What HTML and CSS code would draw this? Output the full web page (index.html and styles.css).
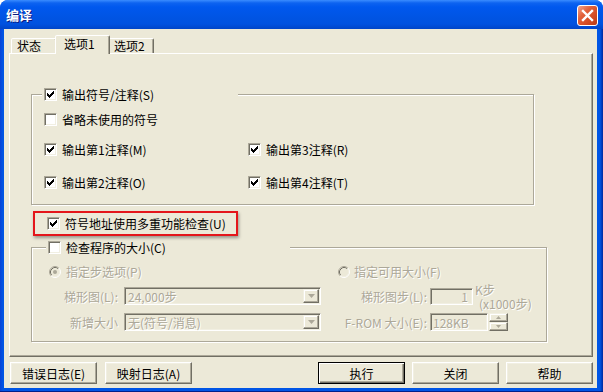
FILE: index.html
```html
<!DOCTYPE html>
<html>
<head>
<meta charset="utf-8">
<title>编译</title>
<link rel="stylesheet" href="styles.css">
</head>
<body>
<div class="window">
  <div class="titlebar">
    <span class="title">编译</span>
    <span class="close">
      <svg width="19" height="19" viewBox="0 0 19 19"><path d="M5 5 L14 14 M14 5 L5 14" stroke="#fff" stroke-width="2.4" stroke-linecap="square"/></svg>
    </span>
  </div>
  <div class="frame">
    <div class="client">
      <div class="tabs">
        <div class="tab t1">状态</div>
        <div class="tab sel">选项1</div>
        <div class="tab t3">选项2</div>
      </div>
      <div class="panel">
        <div class="group g1">
          <div class="legend l1">
            <span class="cb"><svg width="7" height="7" viewBox="0 0 7 7"><path d="M6 0h1v1h-1z M5 1h2v1h-2z M0 2h1v1h-1z M4 2h3v1h-3z M0 3h2v1h-2z M3 3h3v1h-3z M0 4h5v1h-5z M1 5h3v1h-3z M2 6h1v1h-1z" fill="#000"/></svg></span>
            <span>输出符号/注释(S)</span>
          </div>
          <div class="row r2"><span class="cb"></span><span>省略未使用的符号</span></div>
          <div class="grid2 r3">
            <div class="row"><span class="cb"><svg width="7" height="7" viewBox="0 0 7 7"><path d="M6 0h1v1h-1z M5 1h2v1h-2z M0 2h1v1h-1z M4 2h3v1h-3z M0 3h2v1h-2z M3 3h3v1h-3z M0 4h5v1h-5z M1 5h3v1h-3z M2 6h1v1h-1z" fill="#000"/></svg></span><span>输出第1注释(M)</span></div>
            <div class="row"><span class="cb"><svg width="7" height="7" viewBox="0 0 7 7"><path d="M6 0h1v1h-1z M5 1h2v1h-2z M0 2h1v1h-1z M4 2h3v1h-3z M0 3h2v1h-2z M3 3h3v1h-3z M0 4h5v1h-5z M1 5h3v1h-3z M2 6h1v1h-1z" fill="#000"/></svg></span><span>输出第3注释(R)</span></div>
          </div>
          <div class="grid2 r4">
            <div class="row"><span class="cb"><svg width="7" height="7" viewBox="0 0 7 7"><path d="M6 0h1v1h-1z M5 1h2v1h-2z M0 2h1v1h-1z M4 2h3v1h-3z M0 3h2v1h-2z M3 3h3v1h-3z M0 4h5v1h-5z M1 5h3v1h-3z M2 6h1v1h-1z" fill="#000"/></svg></span><span>输出第2注释(O)</span></div>
            <div class="row"><span class="cb"><svg width="7" height="7" viewBox="0 0 7 7"><path d="M6 0h1v1h-1z M5 1h2v1h-2z M0 2h1v1h-1z M4 2h3v1h-3z M0 3h2v1h-2z M3 3h3v1h-3z M0 4h5v1h-5z M1 5h3v1h-3z M2 6h1v1h-1z" fill="#000"/></svg></span><span>输出第4注释(T)</span></div>
          </div>
        </div>

        <div class="mark">
          <span class="cb"><svg width="7" height="7" viewBox="0 0 7 7"><path d="M6 0h1v1h-1z M5 1h2v1h-2z M0 2h1v1h-1z M4 2h3v1h-3z M0 3h2v1h-2z M3 3h3v1h-3z M0 4h5v1h-5z M1 5h3v1h-3z M2 6h1v1h-1z" fill="#000"/></svg></span>
          <span>符号地址使用多重功能检查(U)</span>
        </div>

        <div class="group g2">
          <div class="legend l2"><span class="cb"></span><span>检查程序的大小(C)</span></div>
          <div class="frow fr1">
            <div class="lcell radio-row">
              <svg class="radio" width="12" height="12" viewBox="0 0 12 12">
                <circle cx="6" cy="6" r="4.5" fill="#ECE9D8"/>
                <path d="M2.11 9.89 A5.5 5.5 0 0 1 9.89 2.11" fill="none" stroke="#ACA899"/>
                <path d="M9.89 2.11 A5.5 5.5 0 0 1 2.11 9.89" fill="none" stroke="#fff"/>
                <path d="M2.82 9.18 A4.5 4.5 0 0 1 9.18 2.82" fill="none" stroke="#716F64"/>
                <path d="M9.18 2.82 A4.5 4.5 0 0 1 2.82 9.18" fill="none" stroke="#F1EFE2"/>
                <circle cx="6" cy="6" r="2" fill="#ACA899"/>
              </svg>
              <span class="dis">指定步选项(P)</span>
            </div>
            <div class="rcell radio-row r-right">
              <svg class="radio" width="12" height="12" viewBox="0 0 12 12">
                <circle cx="6" cy="6" r="4.5" fill="#ECE9D8"/>
                <path d="M2.11 9.89 A5.5 5.5 0 0 1 9.89 2.11" fill="none" stroke="#ACA899"/>
                <path d="M9.89 2.11 A5.5 5.5 0 0 1 2.11 9.89" fill="none" stroke="#fff"/>
                <path d="M2.82 9.18 A4.5 4.5 0 0 1 9.18 2.82" fill="none" stroke="#716F64"/>
                <path d="M9.18 2.82 A4.5 4.5 0 0 1 2.82 9.18" fill="none" stroke="#F1EFE2"/>
              </svg>
              <span class="dis">指定可用大小(F)</span>
            </div>
          </div>
          <div class="frow fr2">
            <div class="lcell">
              <span class="lab dis">梯形图(L):</span>
              <div class="field select">
                <span class="val dis">24,000步</span>
                <span class="dropbtn"><svg width="7" height="4" viewBox="0 0 7 4"><path d="M0 0h7l-3.5 4z" fill="#ACA899"/></svg></span>
              </div>
            </div>
            <div class="rcell">
              <span class="lab rlab dis">梯形图步(L):</span>
              <div class="field inp1"><span class="dis">1</span></div>
              <div class="ktext dis"><div class="kl">K步</div><div class="kl kx">(x1000步)</div></div>
            </div>
          </div>
          <div class="frow fr3">
            <div class="lcell">
              <span class="lab dis">新增大小</span>
              <div class="field select">
                <span class="val dis">无(符号/消息)</span>
                <span class="dropbtn"><svg width="7" height="4" viewBox="0 0 7 4"><path d="M0 0h7l-3.5 4z" fill="#ACA899"/></svg></span>
              </div>
            </div>
            <div class="rcell">
              <span class="lab rlab dis">F-ROM 大小(E):</span>
              <div class="field inp2"><span class="dis">128KB</span></div>
              <div class="spin">
                <span class="spinbtn"><svg width="5" height="3" viewBox="0 0 5 3"><path d="M0 3h5l-2.5-3z" fill="#ACA899"/></svg></span>
                <span class="spinbtn"><svg width="5" height="3" viewBox="0 0 5 3"><path d="M0 0h5l-2.5 3z" fill="#ACA899"/></svg></span>
              </div>
            </div>
          </div>
        </div>
      </div>
      <div class="buttons">
        <div class="btn">错误日志(E)</div>
        <div class="btn">映射日志(A)</div>
        <div class="btn def push">执行</div>
        <div class="btn">关闭</div>
        <div class="btn">帮助</div>
      </div>
    </div>
  </div>
</div>
</body>
</html>
```
FILE: styles.css
```css
* { box-sizing: border-box; }
html, body { margin: 0; padding: 0; }
body {
  background: #ffffff;
  font-family: "Noto Sans CJK SC", "Noto Sans", sans-serif;
  font-size: 12px;
  color: #000;
}
.window {
  width: 603px;
  height: 392px;
  display: flex;
  flex-direction: column;
  background: #0055E5;
  border-radius: 8px 8px 0 0;
  overflow: hidden;
}
.titlebar {
  height: 29px;
  flex: none;
  display: flex;
  align-items: center;
  padding: 0 5px 0 6px;
  background: linear-gradient(to bottom, #3A8CFF 0px, #0D63F0 3px, #0058EE 7px, #0054E3 18px, #0052E0 24px, #0045C8 29px);
}
.title {
  flex: 1;
  color: #fff;
  font-weight: bold;
  font-size: 13px;
  line-height: 16px;
  text-shadow: 1px 1px 0 #0A1A80;
}
.close {
  width: 21px;
  height: 21px;
  margin-top: 2px;
  border: 1px solid #fff;
  border-radius: 3px;
  background: linear-gradient(135deg, #F2A58E 0%, #E2623C 35%, #D24A22 70%, #B83A14 100%);
  display: flex;
  align-items: center;
  justify-content: center;
}
.frame {
  flex: 1;
  display: flex;
  padding: 0 6px 4px 4px;
  background: linear-gradient(to right, #0842D6 0, #0055E5 3px, #0055E5 calc(100% - 3px), #00299E 100%);
  box-shadow: inset 0 -1px 0 #00208A;
}
.client {
  flex: 1;
  background: #ECE9D8;
  display: flex;
  flex-direction: column;
  padding: 6px 4px 4px 5px;
}
/* tabs */
.tabs {
  display: flex;
  align-items: flex-end;
  margin-left: 2px;
  margin-bottom: -1px;
  height: 19px;
}
.tab {
  height: 15px;
  margin-bottom: 1px;
  border: 1px solid;
  border-bottom: none;
  border-color: #fff #716F64 transparent #fff;
  border-radius: 2px 2px 0 0;
  box-shadow: inset -1px 0 0 #ACA899;
  padding-left: 5px;
  line-height: 13px;
  background: #ECE9D8;
  white-space: nowrap;
}
.t1 { width: 46px; }
.t3 { width: 46px; }
.tab.sel {
  width: 55px;
  height: 19px;
  margin: 0 -2px 0 -2px;
  padding-left: 8px;
  padding-top: 1px;
  position: relative;
  z-index: 1;
}
/* panel */
.panel {
  height: 304px;
  border: 1px solid;
  border-color: #fff #716F64 #716F64 #fff;
  box-shadow: inset -1px -1px 0 #ACA899;
  padding: 40px 0 0 21px;
}
.group {
  border: 1px solid #ACA899;
  box-shadow: inset 1px 1px 0 #fff, 1px 1px 0 #fff;
}
.g1 {
  width: 503px;
  height: 111px;
  padding-left: 12px;
}
.legend {
  display: flex;
  align-items: center;
  height: 13px;
  margin-top: -7px;
  background: #ECE9D8;
  gap: 5px;
  padding-left: 2px;
  line-height: 13px;
  white-space: nowrap;
}
.l1 { width: 196px; margin-left: -2px; }
.row {
  display: flex;
  align-items: center;
  height: 13px;
  gap: 5px;
  line-height: 13px;
  white-space: nowrap;
}
.r2 { margin-top: 12px; }
.grid2 {
  display: grid;
  grid-template-columns: 204px auto;
}
.r3 { margin-top: 17px; }
.r4 { margin-top: 20px; }
.cb {
  width: 13px;
  height: 13px;
  flex: none;
  background: #fff;
  border: 1px solid;
  border-color: #ACA899 #fff #fff #ACA899;
  box-shadow: inset 1px 1px 0 #716F64, inset -1px -1px 0 #F1EFE2;
  display: flex;
  align-items: center;
  justify-content: center;
}
.cb svg { display: block; }
/* red annotation box */
.mark {
  margin-top: 6px;
  margin-left: 2px;
  width: 205px;
  height: 25px;
  border: 2px solid #E4161B;
  box-shadow: 1px 2px 3px rgba(0, 0, 0, 0.35);
  display: flex;
  align-items: center;
  padding-left: 12px;
  gap: 5px;
  line-height: 13px;
  white-space: nowrap;
}
/* group 2 */
.g2 {
  margin-top: 11px;
  width: 516px;
  height: 95px;
  padding-left: 17px;
}
.l2 { width: 244px; margin-left: -3px; gap: 5px; }
.frow {
  display: flex;
  align-items: center;
}
.fr1 { margin-top: 11px; height: 13px; }
.fr2 { margin-top: 9px; height: 18px; }
.fr3 { margin-top: 8px; height: 18px; }
.lcell {
  width: 289px;
  flex: none;
  display: flex;
  align-items: center;
  height: 100%;
}
.rcell {
  display: flex;
  align-items: center;
  height: 100%;
}
.radio-row { gap: 5px; line-height: 13px; }
.r-right { gap: 4px; }
.radio { display: block; flex: none; }
.dis {
  color: #ACA899;
  text-shadow: 1px 1px 0 #fff;
  white-space: nowrap;
}
.lab {
  width: 75px;
  flex: none;
  text-align: right;
  padding-right: 6px;
  line-height: 13px;
}
.rlab { width: 92px; padding-right: 3px; }
.field {
  border: 1px solid;
  border-color: #ACA899 #fff #fff #ACA899;
  box-shadow: inset 1px 1px 0 #716F64, inset -1px -1px 0 #F1EFE2;
  background: #ECE9D8;
  display: flex;
  align-items: center;
  padding: 1px;
  line-height: 13px;
}
.select { width: 197px; height: 18px; }
.select .val { flex: 1; padding-left: 2px; }
.dropbtn {
  width: 16px;
  height: 14px;
  flex: none;
  border: 1px solid;
  border-color: #F1EFE2 #716F64 #716F64 #F1EFE2;
  box-shadow: inset -1px -1px 0 #ACA899, inset 1px 1px 0 #fff;
  background: #ECE9D8;
  display: flex;
  align-items: center;
  justify-content: center;
}
.dropbtn svg, .spinbtn svg { display: block; }
.inp1 { width: 43px; height: 17px; justify-content: flex-end; padding-right: 4px; }
.inp2 { width: 58px; height: 18px; padding-left: 2px; }
.ktext {
  margin-left: 2px;
  height: 25px;
  flex: none;
  display: flex;
  flex-direction: column;
  justify-content: space-between;
}
.kl { line-height: 11px; height: 11px; }
.kx { padding-left: 4px; }
.spin {
  width: 19px;
  height: 18px;
  margin-left: 1px;
  display: flex;
  flex-direction: column;
}
.spinbtn {
  flex: 1;
  border: 1px solid;
  border-color: #F1EFE2 #716F64 #716F64 #F1EFE2;
  box-shadow: inset -1px -1px 0 #ACA899, inset 1px 1px 0 #fff;
  background: #ECE9D8;
  display: flex;
  align-items: center;
  justify-content: center;
}
/* bottom buttons */
.buttons {
  margin-top: 5px;
  height: 22px;
  display: flex;
  padding-left: 1px;
  gap: 8px;
}
.btn {
  width: 87px;
  height: 22px;
  border: 1px solid;
  border-color: #fff #716F64 #716F64 #fff;
  box-shadow: inset -1px -1px 0 #ACA899, inset 1px 1px 0 #F1EFE2;
  background: #ECE9D8;
  display: flex;
  align-items: center;
  justify-content: center;
  line-height: 13px;
  white-space: nowrap;
}
.push { margin-left: auto; }
.buttons .push ~ .btn { margin-left: -1px; }
.btn.def {
  border-color: #000;
  box-shadow: inset 1px 1px 0 #fff, inset -1px -1px 0 #716F64, inset -2px -2px 0 #ACA899;
}
```
